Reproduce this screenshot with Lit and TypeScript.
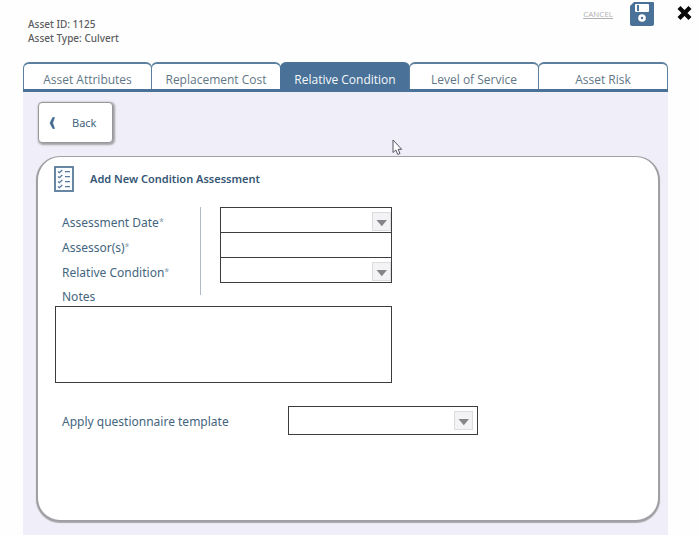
import { LitElement, html, css } from "lit";
import { customElement, state } from "lit/decorators.js";
import { classMap } from "lit/directives/class-map.js";

@customElement("app-root")
class AppRoot extends LitElement {
  @state() private active = 2;
  private tabs = ["Asset Attributes", "Replacement Cost", "Relative Condition", "Level of Service", "Asset Risk"];

  static styles = css`
    :host { display: block; position: relative; background: #fefefe; color: #44657e; font-family: "Noto Sans", sans-serif; font-size: 12px; }
    * { box-sizing: border-box; }
    button { font: inherit; color: inherit; cursor: pointer; padding: 0; border: 0; background: none; }
    svg { display: block; }
    header { display: flex; justify-content: space-between; align-items: flex-start; height: 62px; padding: 1px 7px 0 28px; }
    .asset { padding-top: 16px; font-size: 10px; line-height: 14px; font-weight: 500; color: #5c5c5e; }
    .asset p { margin: 0; }
    .actions { display: flex; align-items: center; }
    .cancel { margin-right: 17px; font: 8px/14px "Open Sans", sans-serif; color: #b0b0b2; text-decoration: underline; }
    .save { margin-right: 23px; }
    .main { margin: 0 31px 0 23px; }
    .tabs { display: grid; grid-template-columns: repeat(5, 1fr); border-bottom: 3px solid #4a7197; }
    .tab { height: 27px; padding-top: 5px; margin-left: -1px; border: 1px solid #5c7f9d; border-width: 2px 1px 0; border-radius: 6px 6px 0 0; background: #fff; font-family: "Open Sans", sans-serif; color: #5f7787; }
    .tab:first-child { margin-left: 0; }
    .tab.active { background: #4a7197; border-color: #4a7197; color: #f4f8fb; }
    .panel { padding: 10px 8px 13px 13px; background: #f0eef8; }
    .back { display: flex; align-items: center; gap: 16px; width: 75px; height: 41px; margin: 0 0 13px 2px; padding: 0 0 0 10px; border: 1px solid #98989b; border-radius: 4px; background: #fff; box-shadow: 1px 1px 2px 1px #a2a2a6; font-size: 11px; }
    .card { min-height: 366px; padding: 9px 15px 20px 16px; border: 2px solid #a0a1a5; border-top-width: 1px; border-radius: 24px; background: #fff; box-shadow: 0 1px 1px #a8a8ac; }
    .title { display: flex; align-items: center; gap: 16px; height: 26px; margin-bottom: 15px; }
    h1 { margin: 0; font-size: 11px; line-height: 16px; font-weight: 600; color: #355674; }
    .fields { display: grid; grid-template-columns: 119px 1px 172px; grid-template-rows: 25px 25px 25px 24px; column-gap: 19px; margin-left: 8px; }
    .fields label { grid-column: 1; align-self: end; line-height: 18px; white-space: nowrap; }
    .fields sup { font-size: 9px; line-height: 0; vertical-align: 2px; color: #8ba0b0; }
    .divider { grid-column: 2; grid-row: 1 / 5; height: 88px; background: #b4bac4; }
    .field { grid-column: 3; height: 26px; }
    .r1 { grid-row: 1; } .r2 { grid-row: 2; } .r3 { grid-row: 3; } .r4 { grid-row: 4; }
    input, textarea, select { display: block; border: 1px solid #3c3c3e; border-radius: 0; background: #fff; padding: 2px 6px; font: inherit; color: inherit; }
    input { width: 100%; }
    textarea { width: 337px; max-width: 100%; height: 77px; margin-left: 1px; resize: none; }
    .select { position: relative; }
    .select select { width: 100%; height: 100%; padding-right: 24px; appearance: none; }
    .arrow { position: absolute; right: 1px; bottom: 2px; pointer-events: none; }
    .template .arrow { right: 5px; bottom: 5px; }
    .template { display: flex; align-items: center; margin: 23px 0 0 8px; }
    .template label { width: 226px; padding-top: 2px; }
    .template .select { width: 190px; height: 29px; }
    .pointer { position: absolute; left: 392px; top: 139px; pointer-events: none; }
  `;

  private select(id: string) {
    return html`
      <select id=${id}><option></option></select>
      <svg class="arrow" width="19" height="19" viewBox="0 0 19 19" aria-hidden="true">
        <rect x=".5" y=".5" width="18" height="18" fill="#f3f3f5" stroke="#dcdcde" />
        <path d="M4.5 8H15L9.8 14.2Z" fill="#85868a" />
      </svg>
    `;
  }

  render() {
    return html`
      <header>
        <div class="asset"><p>Asset ID: 1125</p><p>Asset Type: Culvert</p></div>
        <div class="actions">
          <button class="cancel">CANCEL</button>
          <button class="save" aria-label="Save">
            <svg width="24" height="25" viewBox="0 0 24 25">
              <path d="M4 1H23Q24 1 24 2V23Q24 25 22 25H2Q0 25 0 23V5Z" fill="#4a7197" />
              <rect x="5" y="3" width="14" height="8" rx="1" fill="#fff" />
              <rect x="7" y="4" width="2" height="6" fill="#4a7197" />
              <circle cx="12" cy="17" r="3.8" fill="#fff" />
              <circle cx="12" cy="17" r="1.2" fill="#4a7197" />
            </svg>
          </button>
          <button aria-label="Close">
            <svg width="15" height="18" viewBox="0 0 15 18"><path d="M2 2.5L13 13.5M13 2.5L2 13.5" stroke="#080808" stroke-width="4.2" /></svg>
          </button>
        </div>
      </header>
      <div class="main">
        <nav class="tabs">
          ${this.tabs.map((t, i) => html`<button class=${classMap({ tab: true, active: i === this.active })} @click=${() => (this.active = i)}>${t}</button>`)}
        </nav>
        <main class="panel">
          <button class="back">
            <svg width="7" height="12" viewBox="0 0 7 12"><path d="M5.5 .5H3.8L1 6l2.8 5.5h1.7L3.6 6Z" fill="#426a90" stroke="#426a90" stroke-width=".7" /></svg>
            Back
          </button>
          <section class="card">
            <div class="title">
              <svg width="20" height="26" viewBox="0 0 20 26" fill="none" stroke="#57799a">
                <rect x="1" y="1" width="18" height="24" stroke-width="1.8" fill="#fbfdff" />
                <path d="M4 5.5l1.4 1.2L8.3 4M4 10.5l1.4 1.2L8.3 9M4 15.5l1.4 1.2L8.3 14M4 20.5l1.4 1.2L8.3 19M11 5.7h5M11 10.7h5M11 15.7h5M11 20.7h5" stroke-width="1.3" />
              </svg>
              <h1>Add New Condition Assessment</h1>
            </div>
            <div class="fields">
              <label class="r1" for="date">Assessment Date<sup>*</sup></label>
              <label class="r2" for="assessor">Assessor(s)<sup>*</sup></label>
              <label class="r3" for="condition">Relative Condition<sup>*</sup></label>
              <label class="r4" for="notes">Notes</label>
              <div class="divider"></div>
              <div class="select field r1">${this.select("date")}</div>
              <input class="field r2" id="assessor" />
              <div class="select field r3">${this.select("condition")}</div>
            </div>
            <textarea id="notes"></textarea>
            <div class="template">
              <label for="template">Apply questionnaire template</label>
              <div class="select">${this.select("template")}</div>
            </div>
          </section>
        </main>
      </div>
      <svg class="pointer" width="11" height="17" viewBox="0 0 11 17"><path d="M1 1V13.5L3.8 11L5.8 15.5L8 14.5L6.1 10.3H9.7Z" fill="#fff" stroke="#55555f" /></svg>
    `;
  }
}
